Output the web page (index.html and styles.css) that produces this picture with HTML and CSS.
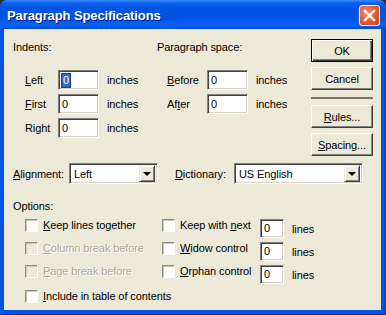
FILE: index.html
```html
<!DOCTYPE html>
<html lang="en">
<head>
    <meta charset="UTF-8">
    <title>Paragraph Specifications</title>
    <link rel="stylesheet" href="styles.css">
</head>
<body>
    <div class="window">
        <div class="titlebar">
            <span class="title">Paragraph Specifications</span>
            <span class="close">
                <svg width="13" height="13" viewBox="0 0 13 13">
                    <path d="M2 2 L11 11 M11 2 L2 11" stroke="#fff" stroke-width="2.4" stroke-linecap="square"/>
                </svg>
            </span>
        </div>
        <div class="client">
            <div class="top">
                <div class="group indents">
                    <div class="heading">Indents:</div>
                    <div class="rows">
                        <div class="row">
                            <span class="lbl"><u>L</u>eft</span>
                            <span class="field"><span class="selected">0</span></span>
                            <span>inches</span>
                        </div>
                        <div class="row">
                            <span class="lbl"><u>F</u>irst</span>
                            <span class="field">0</span>
                            <span>inches</span>
                        </div>
                        <div class="row">
                            <span class="lbl">Right</span>
                            <span class="field">0</span>
                            <span>inches</span>
                        </div>
                    </div>
                </div>
                <div class="group space">
                    <div class="heading">Paragraph space:</div>
                    <div class="rows">
                        <div class="row">
                            <span class="lbl"><u>B</u>efore</span>
                            <span class="field">0</span>
                            <span>inches</span>
                        </div>
                        <div class="row">
                            <span class="lbl">Af<u>t</u>er</span>
                            <span class="field">0</span>
                            <span>inches</span>
                        </div>
                    </div>
                </div>
                <div class="buttons">
                    <span class="btn default">OK</span>
                    <span class="btn">Cancel</span>
                    <span class="separator"></span>
                    <span class="btn"><u>R</u>ules...</span>
                    <span class="btn"><u>S</u>pacing...</span>
                </div>
            </div>

            <div class="dropdowns">
                <span class="lbl-align"><u>A</u>lignment:</span>
                <span class="select align-select">
                    <span class="value">Left</span>
                    <span class="arrow"></span>
                </span>
                <span class="lbl-dict"><u>D</u>ictionary:</span>
                <span class="select dict-select">
                    <span class="value">US English</span>
                    <span class="arrow"></span>
                </span>
            </div>

            <div class="heading options-heading">Options:</div>
            <div class="options">
                <span class="check"><span class="box"></span><span><u>K</u>eep lines together</span></span>
                <span class="check"><span class="box"></span><span>Keep with <u>n</u>ext</span></span>
                <span class="count"><span class="field small">0</span><span>lines</span></span>

                <span class="check disabled"><span class="box"></span><span><u>C</u>olumn break before</span></span>
                <span class="check"><span class="box"></span><span><u>W</u>idow control</span></span>
                <span class="count"><span class="field small">0</span><span>lines</span></span>

                <span class="check disabled"><span class="box"></span><span><u>P</u>age break before</span></span>
                <span class="check"><span class="box"></span><span><u>O</u>rphan control</span></span>
                <span class="count"><span class="field small">0</span><span>lines</span></span>

                <span class="check wide"><span class="box"></span><span><u>I</u>nclude in table of contents</span></span>
            </div>
        </div>
    </div>
</body>
</html>
```

FILE: styles.css
```css
html, body {
    margin: 0;
    background: #2b2b2b;
}
body {
    font-family: "Liberation Sans", Arial, sans-serif;
    font-size: 11px;
    letter-spacing: -0.1px;
    color: #000;
}
u {
    text-decoration-thickness: 1px;
    text-underline-offset: 1px;
}
.window {
    width: 386px;
    height: 315px;
    display: flex;
    flex-direction: column;
    background: #0055e5;
    border-radius: 7px 7px 0 0;
    box-shadow: inset -1px -1px 0 #0a2fa8;
    box-sizing: border-box;
    overflow: hidden;
}
.titlebar {
    height: 29px;
    flex: none;
    display: flex;
    align-items: center;
    justify-content: space-between;
    padding: 0 6px 0 7px;
    background: linear-gradient(#3d8eff 0, #0a5fee 3px, #0054e3 8px, #0054e3 19px, #0a62f5 25px, #0058ee 27px, #0042cc 29px);
}
.title {
    color: #fff;
    font-weight: bold;
    font-size: 13px;
    letter-spacing: -0.1px;
    text-shadow: 1px 1px 0 #0a1e7a;
    margin-top: 1px;
}
.close {
    width: 19px;
    height: 19px;
    border: 1px solid #fff;
    border-radius: 3px;
    background: radial-gradient(circle at 35% 35%, #f08a6a 0, #e05a2e 55%, #c8401a 100%);
    display: flex;
    align-items: center;
    justify-content: center;
    margin-top: 1px;
}
.client {
    flex: 1;
    margin: 0 5px 5px 4px;
    background: #ece9d8;
    padding: 10px 0 0 9px;
}
.top {
    display: flex;
    height: 117px;
}
.heading {
    line-height: 16px;
}
.indents {
    width: 144px;
}
.space {
    width: 154px;
}
.rows {
    margin-top: 15px;
    display: flex;
    flex-direction: column;
    gap: 4px;
}
.row {
    display: flex;
    align-items: center;
    height: 20px;
}
.indents .row {
    padding-left: 12px;
}
.indents .lbl {
    width: 33px;
}
.space .row {
    padding-left: 10px;
}
.space .lbl {
    width: 40px;
}
.field {
    box-sizing: border-box;
    width: 41px;
    height: 20px;
    margin-right: 8px;
    background: #fff;
    border: 1px solid;
    border-color: #808080 #fff #fff #808080;
    box-shadow: inset 1px 1px 0 #404040, inset -1px -1px 0 #d4d0c8;
    padding: 0 0 0 3px;
    line-height: 18px;
}
.field.small {
    width: 24px;
    height: 19px;
    line-height: 17px;
}
.selected {
    display: inline-block;
    background: #316ac5;
    color: #fff;
    line-height: 13px;
    padding: 0 1px;
    margin-top: 2px;
    outline: 1px solid #1c3f7a;
}
.buttons {
    width: 62px;
    display: flex;
    flex-direction: column;
    gap: 5px;
}
.btn {
    box-sizing: border-box;
    height: 23px;
    display: flex;
    align-items: center;
    justify-content: center;
    border: 1px solid;
    border-color: #fff #404040 #404040 #fff;
    box-shadow: inset -1px -1px 0 #808080;
    background: #ece9d8;
}
.btn.default {
    border-color: #000;
    box-shadow: inset 1px 1px 0 #fff, inset -1px -1px 0 #404040, inset -2px -2px 0 #808080;
}
.separator {
    height: 2px;
    margin: 2px 0 1px;
    background: #77756a;
}
.dropdowns {
    display: flex;
    align-items: center;
    margin-top: 7px;
    height: 21px;
}
.lbl-align {
    width: 56px;
}
.lbl-dict {
    width: 59px;
    margin-left: 17px;
}
.select {
    box-sizing: border-box;
    height: 21px;
    display: flex;
    align-items: center;
    justify-content: space-between;
    background: #fff;
    border: 1px solid;
    border-color: #808080 #fff #fff #808080;
    box-shadow: inset 1px 1px 0 #404040, inset -1px -1px 0 #d4d0c8;
    padding: 2px 2px 2px 4px;
}
.align-select {
    width: 89px;
}
.dict-select {
    width: 129px;
}
.arrow {
    box-sizing: border-box;
    width: 16px;
    height: 17px;
    background: #ece9d8;
    border: 1px solid;
    border-color: #ece9d8 #404040 #404040 #ece9d8;
    box-shadow: inset 1px 1px 0 #fff, inset -1px -1px 0 #808080;
    display: flex;
    align-items: center;
    justify-content: center;
}
.arrow::after {
    content: "";
    border-left: 4px solid transparent;
    border-right: 4px solid transparent;
    border-top: 4px solid #000;
    margin-top: 1px;
}
.options-heading {
    margin-top: 14px;
}
.options {
    display: grid;
    grid-template-columns: 137px 98px auto;
    grid-template-rows: 23px 23px 24px auto;
    align-items: start;
    margin-top: 4px;
    padding-left: 12px;
}
.check {
    display: flex;
    align-items: center;
    gap: 5px;
    height: 14px;
}
.check.wide {
    grid-column: 1 / 4;
    margin-top: 1px;
}
.box {
    box-sizing: border-box;
    width: 13px;
    height: 13px;
    background: #fff;
    border: 1px solid;
    border-color: #8d8b80 #fff #fff #8d8b80;
    box-shadow: inset 1px 1px 0 #c9c6b6;
}
.check.disabled {
    color: #aca899;
    text-shadow: 1px 1px 0 #fff;
}
.check.disabled .box {
    background: #ece9d8;
}
.count {
    display: flex;
    align-items: center;
    margin-top: 1px;
}
```
